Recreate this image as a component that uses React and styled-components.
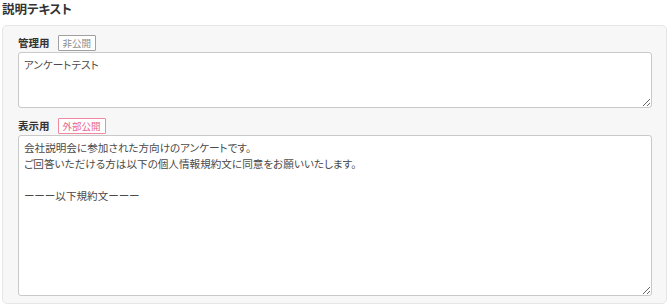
import React from 'react'
import styled, { createGlobalStyle } from 'styled-components'

const GlobalStyle = createGlobalStyle`
    html, body {
        margin: 0;
        padding: 0;
        background: #fff;
        font-family: "Noto Sans CJK JP", "Noto Sans", sans-serif;
        color: #333;
    }
`
const Container = styled.div`
    padding: 0 3px 0 2px;
`
const Heading = styled.h2`
    margin: 0;
    height: 17px;
    font-size: 12.5px;
    font-feature-settings: "palt";
    line-height: 17px;
    font-weight: bold;
    color: #333;
`
const Panel = styled.div`
    margin-top: 8px;
    background: #f7f7f7;
    border: 1px solid #e6e6e6;
    border-radius: 5px;
    padding: 9px 14px 7px 15px;
    display: flex;
    flex-direction: column;
`
const Field = styled.div`
    display: flex;
    flex-direction: column;
    gap: 2px;
    & + & {
        margin-top: 10px;
    }
`
const LabelRow = styled.div`
    display: flex;
    align-items: center;
    gap: 8px;
    height: 15px;
`
const Label = styled.span`
    font-size: 10.5px;
    font-weight: bold;
    color: #333;
`
const Tag = styled.span`
    box-sizing: border-box;
    height: 16px;
    padding: 0 4px;
    font-size: 9.5px;
    line-height: 14px;
    border: 1px solid ${ props => props.public ? '#f08aa3' : '#a0a0a0' };
    color: ${ props => props.public ? '#e8628a' : '#8a8a8a' };
    background: #fff;
    border-radius: 1px;
`
const Memo = styled.textarea`
    box-sizing: border-box;
    width: 100%;
    height: ${ props => props.rows }px;
    margin: 0;
    padding: 4px 5px;
    border: 1px solid #c9c9c9;
    border-radius: 3px;
    background: #fff;
    font-family: "Noto Sans CJK JP", "Noto Sans", sans-serif;
    font-size: 10.6px;
    font-feature-settings: "palt";
    line-height: 16px;
    color: #4a4a4a;
    outline: none;
    display: block;
`

const publicText = `会社説明会に参加された方向けのアンケートです。
ご回答いただける方は以下の個人情報規約文に同意をお願いいたします。

ーーー以下規約文ーーー`

export default function App() {
    return (
        <Container>
            <GlobalStyle />
            <Heading>説明テキスト</Heading>
            <Panel>
                <Field>
                    <LabelRow>
                        <Label>管理用</Label>
                        <Tag>非公開</Tag>
                    </LabelRow>
                    <Memo rows={ 56 } defaultValue="アンケートテスト" />
                </Field>
                <Field>
                    <LabelRow>
                        <Label>表示用</Label>
                        <Tag public>外部公開</Tag>
                    </LabelRow>
                    <Memo rows={ 161 } defaultValue={ publicText } />
                </Field>
            </Panel>
        </Container>
    )
}
